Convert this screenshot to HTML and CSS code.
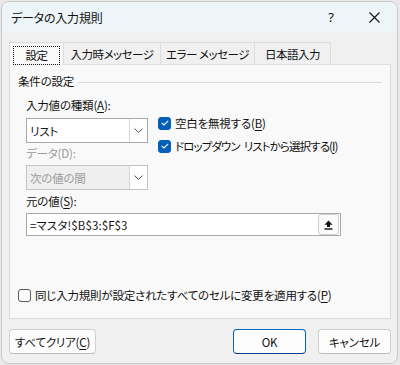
FILE: index.html
```html
<!DOCTYPE html>
<html lang="ja">

<head>
    <meta charset="UTF-8">
    <title>データの入力規則</title>
    <link rel="stylesheet" href="styles.css">
</head>

<body>
    <div class="window">
        <div class="titlebar">
            <span class="title">データの入力規則</span>
            <span class="help">?</span>
            <span class="close">
                <svg width="11" height="11" viewBox="0 0 11 11">
                    <path d="M0.5 0.5 L10.5 10.5 M10.5 0.5 L0.5 10.5" stroke="#1a1a1a" stroke-width="1.2" fill="none" />
                </svg>
            </span>
        </div>

        <div class="content">
            <div class="tabs">
                <div class="tab active"><span class="focus">設定</span></div>
                <div class="tab t2">入力時メッセージ</div>
                <div class="tab t3">エラー メッセージ</div>
                <div class="tab t4">日本語入力</div>
            </div>

            <div class="panel">
                <div class="legend">
                    <span>条件の設定</span>
                    <span class="rule"></span>
                </div>

                <div class="fields">
                    <div class="left">
                        <div class="label">入力値の種類(<u>A</u>):</div>
                        <div class="combo">
                            <span class="value">リスト</span>
                            <span class="drop"><svg width="9" height="5" viewBox="0 0 9 5"><path d="M0.5 0.5 L4.5 4.5 L8.5 0.5" stroke="#555" fill="none" /></svg></span>
                        </div>
                        <div class="label disabled">データ(D):</div>
                        <div class="combo off">
                            <span class="value">次の値の間</span>
                            <span class="drop"><svg width="9" height="5" viewBox="0 0 9 5"><path d="M0.5 0.5 L4.5 4.5 L8.5 0.5" stroke="#555" fill="none" /></svg></span>
                        </div>
                    </div>
                    <div class="right">
                        <label class="check">
                            <span class="box on"><svg width="8" height="6" viewBox="0 0 8 6"><path d="M0.8 3 L3 5 L7.2 0.8" stroke="#fff" stroke-width="1.1" fill="none" /></svg></span>
                            空白を無視する(<u>B</u>)
                        </label>
                        <label class="check narrow">
                            <span class="box on"><svg width="8" height="6" viewBox="0 0 8 6"><path d="M0.8 3 L3 5 L7.2 0.8" stroke="#fff" stroke-width="1.1" fill="none" /></svg></span>
                            ドロップダウン<span class="gap"></span>リストから選択する(<u>I</u>)
                        </label>
                    </div>
                </div>

                <div class="label source-label">元の値(<u>S</u>):</div>
                <div class="source">
                    <span class="value">=マスタ!$B$3:$F$3</span>
                    <span class="pick">
                        <svg width="9" height="10" viewBox="0 0 9 10">
                            <path d="M4.5 0.5 L8.5 4.8 L6 4.8 L6 7 L3 7 L3 4.8 L0.5 4.8 Z" fill="#111" />
                            <rect x="0.5" y="8.3" width="8" height="1.4" fill="#111" />
                        </svg>
                    </span>
                </div>

                <label class="check apply">
                    <span class="box"></span>
                    同じ入力規則が設定されたすべてのセルに変更を適用する(<u>P</u>)
                </label>
            </div>

            <div class="footer">
                <button class="btn clear">すべてクリア(<u>C</u>)</button>
                <span class="spacer"></span>
                <button class="btn ok">OK</button>
                <button class="btn cancel">キャンセル</button>
            </div>
        </div>
    </div>
</body>

</html>
```

FILE: styles.css
```css
/* General styles */

* {
    box-sizing: border-box;
}

body {
    margin: 0;
    background-color: #e9e9e9;
    font-family: "Noto Sans CJK JP", "Noto Sans", sans-serif;
    font-size: 11.5px;
    letter-spacing: -0.2px;
    font-feature-settings: "palt";
    color: #111;
}

u {
    text-decoration: underline;
    text-underline-offset: 2px;
}

.window {
    width: 397px;
    height: 363px;
    margin: 1px 0 0 1px;
    background-color: #f0f0f0;
    border: 1px solid #c8c8c8;
    border-radius: 8px;
    overflow: hidden;
    display: flex;
    flex-direction: column;
}

.titlebar {
    height: 30px;
    flex: none;
    display: flex;
    align-items: center;
    background-color: #eef5f8;
    padding-left: 9px;
}

.title {
    font-size: 12px;
    flex: 1;
}

.help {
    width: 46px;
    text-align: center;
    font-family: "Noto Sans", sans-serif;
    font-size: 13px;
    margin-right: -3px;
}

.close {
    width: 46px;
    display: flex;
    justify-content: center;
}

.content {
    flex: 1;
    padding: 10px 6px 0 7px;
    display: flex;
    flex-direction: column;
}

/* Tabs */

.tabs {
    display: flex;
    height: 22px;
    align-items: flex-end;
}

.tab {
    height: 22px;
    border: 1px solid #dcdcdc;
    border-bottom: none;
    margin-left: -1px;
    display: flex;
    align-items: center;
    justify-content: center;
    background-color: #f0f0f0;
    letter-spacing: -0.5px;
}

.tab.active {
    width: 55px;
    margin-left: 0;
    background-color: #f9f9f9;
    position: relative;
    z-index: 1;
    height: 23px;
    margin-bottom: -1px;
}

.focus {
    width: 47px;
    height: 19px;
    border: 1px dotted #111;
    display: flex;
    align-items: center;
    justify-content: center;
    margin-top: 2px;
}

.t2 {
    width: 98px;
}

.t3 {
    width: 95px;
}

.t4 {
    width: 77px;
}

/* Panel */

.panel {
    height: 255px;
    border: 1px solid #dcdcdc;
    background-color: #f9f9f9;
    padding: 8px 8px 0 16px;
    display: flex;
    flex-direction: column;
}

.legend {
    display: flex;
    align-items: center;
    height: 16px;
    margin-left: -8px;
}

.rule {
    flex: 1;
    height: 1px;
    background-color: #dcdcdc;
    margin-left: 4px;
    margin-top: 2px;
}

.label {
    height: 16px;
    line-height: 16px;
    margin-top: 8px;
}

.label.disabled {
    color: #9a9a9a;
    margin-top: 2px;
}

.label.source-label {
    margin-top: 3px;
}

.fields {
    display: flex;
}

.left {
    width: 122px;
    display: flex;
    flex-direction: column;
}

.right {
    margin-left: 10px;
    padding-top: 26px;
    display: flex;
    flex-direction: column;
    gap: 7px;
}

.combo {
    margin-top: 5px;
    height: 25px;
    border: 1px solid #a8a8a8;
    background-color: #fff;
    display: flex;
    align-items: center;
    padding-left: 3px;
}

.combo .value {
    flex: 1;
}

.drop {
    width: 18px;
    height: 23px;
    border-left: 1px solid #d6d6d6;
    background-color: #fff;
    display: flex;
    align-items: center;
    justify-content: center;
}

.combo.off {
    background-color: #efefef;
    color: #9a9a9a;
    border-color: #c4c4c4;
    margin-top: 4px;
}

.check {
    display: flex;
    align-items: center;
    height: 16px;
    white-space: nowrap;
}

.check.narrow {
    letter-spacing: -0.9px;
}

.gap {
    width: 4px;
}

.box {
    width: 13px;
    height: 13px;
    border: 1px solid #5a5a5a;
    border-radius: 3px;
    background-color: #fbfbfb;
    margin-right: 4px;
    display: flex;
    align-items: center;
    justify-content: center;
}

.box.on {
    background-color: #005fb8;
    border-color: #005fb8;
}

.source {
    margin-top: 4px;
    width: 315px;
    height: 23px;
    border: 1px solid #a8a8a8;
    background-color: #fff;
    display: flex;
    align-items: center;
    padding: 0 1px 0 3px;
}

.source .value {
    flex: 1;
    letter-spacing: 0.1px;
}

.pick {
    width: 21px;
    height: 21px;
    border: 1px solid #d0d0d0;
    border-radius: 3px;
    background-color: #fbfbfb;
    display: flex;
    align-items: center;
    justify-content: center;
}

.apply {
    margin-top: auto;
    margin-bottom: 15px;
    margin-left: -8px;
}

/* Footer */

.footer {
    display: flex;
    margin-top: 10px;
}

.spacer {
    flex: 1;
}

.btn {
    height: 25px;
    font-family: inherit;
    font-size: 11.5px;
    letter-spacing: -0.2px;
    font-feature-settings: "palt";
    color: #111;
    background-color: #fdfdfd;
    border: 1px solid #d0d0d0;
    border-bottom-color: #bcbcbc;
    border-radius: 4px;
    padding: 0;
}

.clear {
    width: 87px;
}

.ok {
    width: 73px;
    border-color: #0067c0;
    border-bottom-color: #003e92;
}

.cancel {
    width: 73px;
    margin-left: 12px;
}
```
